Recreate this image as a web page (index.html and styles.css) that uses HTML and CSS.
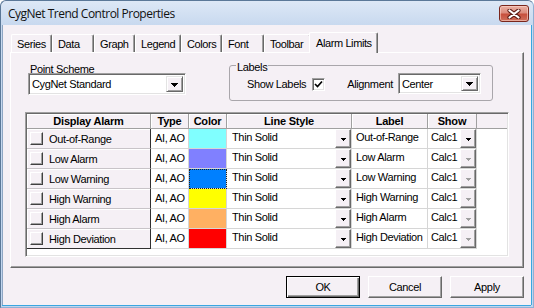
FILE: index.html
```html
<!DOCTYPE html>
<html>
<head>
<meta charset="utf-8">
<link rel="stylesheet" href="styles.css">
</head>
<body>
<div class="window">
  <div class="titlebar">
    <span class="title">CygNet Trend Control Properties</span>
    <div class="close">
      <svg width="14" height="10" viewBox="0 0 14 10">
        <path d="M2.5 1.5 L11.5 8.5 M11.5 1.5 L2.5 8.5" stroke="#5e1d15" stroke-width="4.2" stroke-linecap="round"/>
        <path d="M2.5 1.5 L11.5 8.5 M11.5 1.5 L2.5 8.5" stroke="#ffffff" stroke-width="2.2" stroke-linecap="round"/>
      </svg>
    </div>
  </div>
  <div class="client">
    <div class="tabs">
      <div class="tab tab-series">Series</div>
      <div class="tab tab-data">Data</div>
      <div class="tab tab-graph">Graph</div>
      <div class="tab tab-legend">Legend</div>
      <div class="tab tab-colors">Colors</div>
      <div class="tab tab-font">Font</div>
      <div class="tab tab-toolbar">Toolbar</div>
      <div class="tab tab-alarm active">Alarm Limits</div>
    </div>
    <div class="page">
      <div class="top">
        <div class="scheme">
          <div class="scheme-label">Point Scheme</div>
          <div class="combo combo-scheme">
            <span class="combo-text">CygNet Standard</span>
            <span class="drop"><svg width="7" height="4" shape-rendering="crispEdges"><polygon points="0,0 7,0 4,4 3,4" fill="#000"/></svg></span>
          </div>
        </div>
        <fieldset class="group">
          <legend>Labels</legend>
          <span class="show-label">Show Labels</span>
          <span class="check"><svg width="9" height="9" viewBox="0 0 9 9"><polyline points="1,4 3.5,6.5 8,1.5" fill="none" stroke="#000" stroke-width="1.7"/></svg></span>
          <span class="align-label">Alignment</span>
          <div class="combo combo-align">
            <span class="combo-text">Center</span>
            <span class="drop"><svg width="7" height="4" shape-rendering="crispEdges"><polygon points="0,0 7,0 4,4 3,4" fill="#000"/></svg></span>
          </div>
        </fieldset>
      </div>
      <div class="grid">
        <div class="grow head">
          <div class="hc">Display Alarm</div>
          <div class="hc">Type</div>
          <div class="hc">Color</div>
          <div class="hc">Line Style</div>
          <div class="hc">Label</div>
          <div class="hc">Show</div>
          <div class="hc-rest"></div>
        </div>
        <div class="grow">
          <div class="fc"><span class="rbtn"></span>Out-of-Range</div>
          <div class="c type">AI, AO</div>
          <div class="c sw sw-cyan"></div>
          <div class="c dd"><span class="ddt">Thin Solid</span><span class="gdrop"><svg width="5" height="3" shape-rendering="crispEdges"><polygon points="0,0 5,0 3,3 2,3" fill="#000"/></svg></span></div>
          <div class="c lab">Out-of-Range</div>
          <div class="c dd show"><span class="ddt">Calc1</span><span class="gdrop"><svg width="5" height="3" shape-rendering="crispEdges"><polygon points="0,0 5,0 3,3 2,3" fill="#000"/></svg></span></div>
        </div>
        <div class="grow">
          <div class="fc"><span class="rbtn"></span>Low Alarm</div>
          <div class="c type">AI, AO</div>
          <div class="c sw sw-violet"></div>
          <div class="c dd"><span class="ddt">Thin Solid</span><span class="gdrop"><svg width="5" height="3" shape-rendering="crispEdges"><polygon points="0,0 5,0 3,3 2,3" fill="#000"/></svg></span></div>
          <div class="c lab">Low Alarm</div>
          <div class="c dd show"><span class="ddt">Calc1</span><span class="gdrop"><svg width="5" height="3" shape-rendering="crispEdges"><polygon points="0,0 5,0 3,3 2,3" fill="#a0a0a0"/></svg></span></div>
        </div>
        <div class="grow">
          <div class="fc"><span class="rbtn"></span>Low Warning</div>
          <div class="c type">AI, AO</div>
          <div class="c sw sw-blue focus"></div>
          <div class="c dd"><span class="ddt">Thin Solid</span><span class="gdrop"><svg width="5" height="3" shape-rendering="crispEdges"><polygon points="0,0 5,0 3,3 2,3" fill="#000"/></svg></span></div>
          <div class="c lab">Low Warning</div>
          <div class="c dd show"><span class="ddt">Calc1</span><span class="gdrop"><svg width="5" height="3" shape-rendering="crispEdges"><polygon points="0,0 5,0 3,3 2,3" fill="#a0a0a0"/></svg></span></div>
        </div>
        <div class="grow">
          <div class="fc"><span class="rbtn"></span>High Warning</div>
          <div class="c type">AI, AO</div>
          <div class="c sw sw-yellow"></div>
          <div class="c dd"><span class="ddt">Thin Solid</span><span class="gdrop"><svg width="5" height="3" shape-rendering="crispEdges"><polygon points="0,0 5,0 3,3 2,3" fill="#000"/></svg></span></div>
          <div class="c lab">High Warning</div>
          <div class="c dd show"><span class="ddt">Calc1</span><span class="gdrop"><svg width="5" height="3" shape-rendering="crispEdges"><polygon points="0,0 5,0 3,3 2,3" fill="#a0a0a0"/></svg></span></div>
        </div>
        <div class="grow">
          <div class="fc"><span class="rbtn"></span>High Alarm</div>
          <div class="c type">AI, AO</div>
          <div class="c sw sw-orange"></div>
          <div class="c dd"><span class="ddt">Thin Solid</span><span class="gdrop"><svg width="5" height="3" shape-rendering="crispEdges"><polygon points="0,0 5,0 3,3 2,3" fill="#000"/></svg></span></div>
          <div class="c lab">High Alarm</div>
          <div class="c dd show"><span class="ddt">Calc1</span><span class="gdrop"><svg width="5" height="3" shape-rendering="crispEdges"><polygon points="0,0 5,0 3,3 2,3" fill="#a0a0a0"/></svg></span></div>
        </div>
        <div class="grow last">
          <div class="fc"><span class="rbtn"></span>High Deviation</div>
          <div class="c type">AI, AO</div>
          <div class="c sw sw-red"></div>
          <div class="c dd"><span class="ddt">Thin Solid</span><span class="gdrop"><svg width="5" height="3" shape-rendering="crispEdges"><polygon points="0,0 5,0 3,3 2,3" fill="#000"/></svg></span></div>
          <div class="c lab">High Deviation</div>
          <div class="c dd show"><span class="ddt">Calc1</span><span class="gdrop"><svg width="5" height="3" shape-rendering="crispEdges"><polygon points="0,0 5,0 3,3 2,3" fill="#a0a0a0"/></svg></span></div>
        </div>
      </div>
    </div>
    <div class="buttons">
      <div class="btn default">OK</div>
      <div class="btn">Cancel</div>
      <div class="btn">Apply</div>
    </div>
  </div>
</div>
</body>
</html>
```
FILE: styles.css
```css
* { box-sizing: border-box; }
html, body { margin: 0; padding: 0; }
body {
  width: 534px;
  height: 308px;
  overflow: hidden;
  background: #ffffff;
  font-family: "Liberation Sans", Arial, sans-serif;
  font-size: 11px;
  letter-spacing: -0.35px;
  color: #000;
}

.window {
  width: 534px;
  height: 308px;
  display: flex;
  flex-direction: column;
  background: linear-gradient(180deg, #dde8f6 0px, #c8d9ef 24px, #c0d5ee 100%);
  border: 1px solid #5b7898;
  border-right-color: #8fb0d4;
  border-bottom-color: #8fb0d4;
  border-radius: 6px 6px 0 0;
}

.titlebar {
  height: 24px;
  flex: none;
  display: flex;
  align-items: flex-start;
  padding-left: 7px;
}
.title {
  font-family: "Open Sans", "Noto Sans", sans-serif;
  font-size: 12px;
  line-height: 16px;
  margin-top: 5px;
  color: #111;
  letter-spacing: -0.5px;
}
.close {
  margin-left: auto;
  margin-right: 4px;
  margin-top: 4px;
  width: 30px;
  height: 17px;
  border: 1px solid #7a261c;
  border-radius: 3px;
  background: linear-gradient(180deg, #eab1a5 0%, #dc8c7d 45%, #c7503d 55%, #d0705c 100%);
  box-shadow: inset 0 0 0 1px rgba(255, 220, 210, 0.55);
  display: flex;
  align-items: center;
  justify-content: center;
}

.client {
  flex: 1;
  margin: 0 2px 2px 1px;
  background: #f5f0f5;
  border-left: 1px solid #8ea6c3;
  padding: 7px 7px 7px 7px;
  display: flex;
  flex-direction: column;
  box-shadow: 1px 0 0 #3aa6e0, 0 1px 0 #3aa6e0;
}

/* tabs */
.tabs {
  height: 20px;
  flex: none;
  display: flex;
  align-items: flex-end;
  margin-left: 1px;
  position: relative;
  z-index: 1;
}
.tab {
  height: 18px;
  padding: 3px 0 0 5px;
  border-top: 1px solid #ffffff;
  border-left: 1px solid #ffffff;
  border-right: 1px solid #696969;
  border-radius: 2px 2px 0 0;
  box-shadow: inset -1px 0 #a0a0a0;
  line-height: 13px;
  letter-spacing: -0.4px;
  white-space: nowrap;
}
.tab-series { width: 41px; }
.tab-data { width: 42px; }
.tab-graph { width: 41px; }
.tab-legend { width: 46px; }
.tab-colors { width: 41px; }
.tab-font { width: 42px; }
.tab-toolbar { width: 47px; }
.tab.active {
  width: 69px;
  height: 21px;
  margin: 0 -2px -1px -2px;
  padding: 4px 0 0 6px;
  background: #f5f0f5;
  position: relative;
}

/* page */
.page {
  height: 216px;
  flex: none;
  border: 1px solid;
  border-color: #ffffff #696969 #696969 #ffffff;
  box-shadow: inset -1px -1px #a0a0a0;
}
.top {
  height: 48px;
  display: flex;
  align-items: flex-start;
}
.scheme {
  margin: 12px 0 0 17px;
}
.scheme-label {
  padding-left: 2px;
  height: 8px;
  line-height: 8px;
}

.combo {
  display: flex;
  align-items: center;
  background: #ffffff;
  border: 1px solid;
  border-color: #a0a0a0 #ffffff #ffffff #a0a0a0;
  box-shadow: inset 1px 1px #696969, inset -1px -1px #e3e3e3;
  padding: 2px;
}
.combo-text {
  flex: 1;
  padding-left: 1px;
  line-height: 14px;
  white-space: nowrap;
}
.drop {
  width: 17px;
  height: 100%;
  flex: none;
  display: flex;
  align-items: center;
  justify-content: center;
  background: #f5f0f5;
  border: 1px solid;
  border-color: #e3e3e3 #696969 #696969 #e3e3e3;
  box-shadow: inset 1px 1px #ffffff, inset -1px -1px #a0a0a0;
  padding-top: 1px;
}
.combo-scheme {
  width: 158px;
  height: 22px;
}
.combo-align {
  width: 83px;
  height: 21px;
  flex: none;
  margin-left: 5px;
  margin-top: -1px;
}

.group {
  margin: 3px 0 0 43px;
  width: 264px;
  min-width: 0;
  padding: 0 8px 6px 6px;
  border: 1px solid #a9a6ab;
  border-radius: 3px;
  display: flex;
  align-items: center;
  white-space: nowrap;
}
.group legend {
  padding: 5px 1px 0 1px;
  line-height: 13px;
}
.show-label { margin-left: 11px; flex: none; }
.check {
  width: 13px;
  height: 13px;
  flex: none;
  margin-left: 6px;
  background: #ffffff;
  border: 1px solid;
  border-color: #a0a0a0 #ffffff #ffffff #a0a0a0;
  box-shadow: inset 1px 1px #696969, inset -1px -1px #e3e3e3;
  display: flex;
  align-items: center;
  justify-content: center;
}
.align-label { margin-left: 22px; flex: none; }

/* grid */
.grid {
  margin: 11px 0 0 14px;
  width: 484px;
  height: 145px;
  background: #ffffff;
  border: 1px solid;
  border-color: #a0a0a0 #ffffff #ffffff #a0a0a0;
  box-shadow: inset 1px 1px #696969, inset -1px -1px #e3e3e3;
  padding: 1px;
}
.grow {
  display: grid;
  grid-template-columns: 124px 38px 38px 125px 76px 49px 1fr;
  height: 20px;
}
.grow.head {
  height: 15px;
  background: #f5f0f5;
}
.hc {
  border-right: 1px solid #a0a0a0;
  border-bottom: 1px solid #a0a0a0;
  box-shadow: inset 1px 1px #ffffff;
  font-weight: bold;
  text-align: center;
  line-height: 14px;
  letter-spacing: -0.2px;
}
.hc-rest {
  border-bottom: 1px solid #a0a0a0;
}
.fc {
  display: flex;
  align-items: center;
  background: #f5f0f5;
  border-right: 1px solid #303030;
  border-bottom: 1px solid #c8c4c8;
  box-shadow: inset 1px 1px #ffffff;
  padding-left: 3px;
  white-space: nowrap;
}
.grow.last .fc { border-bottom-color: #303030; }
.rbtn {
  width: 13px;
  height: 13px;
  flex: none;
  margin-right: 6px;
  background: #f5f0f5;
  border: 1px solid;
  border-color: #ffffff #404040 #404040 #ffffff;
  box-shadow: inset -1px -1px #a0a0a0;
}
.c {
  border-right: 1px solid #d6d6d6;
  border-bottom: 1px solid #d6d6d6;
}
.type {
  padding-left: 4px;
  line-height: 19px;
  white-space: nowrap;
}
.sw-cyan { background: #80ffff; }
.sw-violet { background: #8080ff; }
.sw-blue { background: #0080ff; }
.sw-yellow { background: #ffff00; }
.sw-orange { background: #ffb062; }
.sw-red { background: #ff0000; }
.focus {
  outline: 1px dotted #202020;
  outline-offset: -1px;
}
.dd {
  display: flex;
  align-items: flex-start;
  padding-left: 5px;
}
.dd.show { padding-left: 3px; }
.ddt {
  flex: 1;
  padding-top: 1px;
  line-height: 14px;
  white-space: nowrap;
  overflow: hidden;
}
.gdrop {
  width: 16px;
  height: 19px;
  flex: none;
  display: flex;
  align-items: center;
  justify-content: center;
  background: #f5f0f5;
  border: 1px solid;
  border-color: #ffffff #696969 #696969 #ffffff;
  box-shadow: inset -1px -1px #a0a0a0;
  padding-top: 1px;
}
.lab {
  padding-left: 4px;
  padding-top: 1px;
  line-height: 14px;
  white-space: nowrap;
  overflow: hidden;
}

/* buttons */
.buttons {
  margin-top: 8px;
  display: flex;
  justify-content: flex-end;
  gap: 8px;
}
.btn {
  width: 74px;
  height: 22px;
  background: #f5f0f5;
  border: 1px solid;
  border-color: #ffffff #696969 #696969 #ffffff;
  box-shadow: inset -1px -1px #a0a0a0;
  display: flex;
  align-items: center;
  justify-content: center;
  line-height: 14px;
}
.btn.default {
  border-color: #000000;
  box-shadow: inset 1px 1px #ffffff, inset -1px -1px #696969, inset -2px -2px #a0a0a0;
}
```
